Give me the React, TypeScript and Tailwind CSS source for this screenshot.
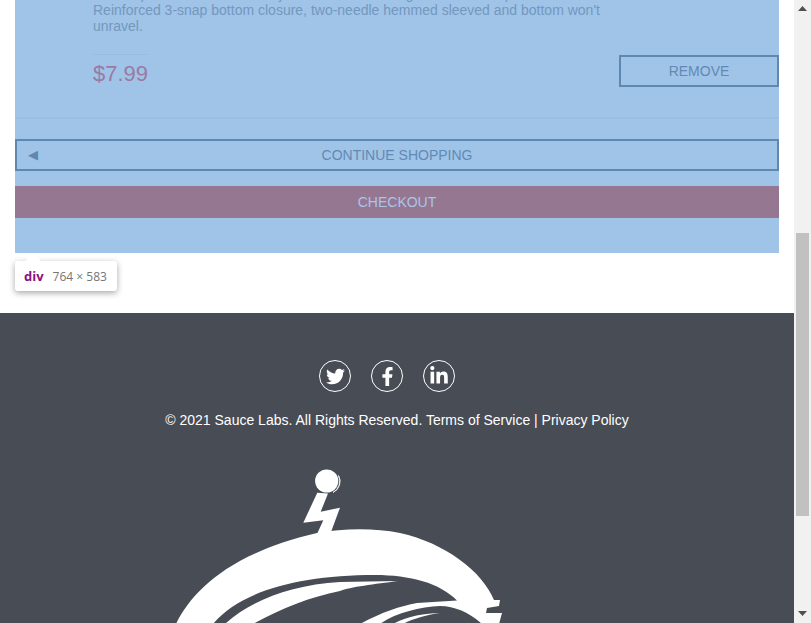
import React from 'react';
import { FaFacebookF, FaLinkedinIn, FaTwitter } from 'react-icons/fa';

const SOCIALS = [
  { id: 'twitter', Icon: FaTwitter, size: 'text-[19px]' },
  { id: 'facebook', Icon: FaFacebookF, size: 'text-[19px]' },
  { id: 'linkedin', Icon: FaLinkedinIn, size: 'text-[20px]' },
];

const SauceLogo = () => (
  <svg className="block" width="360" height="163" viewBox="160 460 360 163" fill="#fff">
    {/* antenna */}
    <circle cx="326.7" cy="480" r="11.6" />
    <path d="M338.5 474.5 A13 13 0 0 1 333 491.5 A12 12 0 0 0 338.5 474.5Z" stroke="#fff" strokeWidth="0.8" fill="none" />
    <path d="M317.3 491.7 L303.3 521.7 L323.3 519.3 L317 533 L331 531 L340 506.7 L320.7 510.7 L328 492.5Z" />
    {/* helmet */}
    <path d="M176 623 C192 590 230 552 317 532 C345 527 375 527 400 532 C445 542 482 570 494 599 L500 599 L499 605 L487 607 L486 612 L502 612 L499 623Z" />
    <path d="M213 623 C240 590 300 574 375 574 C410 574 440 582 457 599.5 L417 602 C400 605 380 612 360 623Z" fill="#484c55" />
    <path d="M225 623 C250 600 290 584 340 581 L398 580 C375 583 350 586 340 590 C310 596 280 608 253 623Z" />
    {/* visor */}
    <path d="M380 623 C395 612 420 606 440 605 C455 605 470 612 482 623Z" fill="#484c55" />
    <path d="M393 623 C405 616 425 612 440 612 C425 614 410 619 403 623Z" />
  </svg>
);

export default function App() {
  return (
    <div className="flex h-[623px] overflow-hidden font-['Liberation_Sans',Arial,sans-serif]">
      <main className="relative w-[794px] shrink-0 bg-white">
        <div className="mx-[15px] h-[253px] overflow-hidden bg-[#9fc4e8]">
          <div className="flex h-[119px] border-b-2 border-[#9bbfe3] pl-[78px]">
            <div className="w-[526px] shrink-0">
              <p className="-mt-[14px] text-[14px] leading-[16px] text-[#7497bd]">
                Rib snap infant onesie for the junior automation engineer in development.
                <br />
                Reinforced 3-snap bottom closure, two-needle hemmed sleeved and bottom won't
                <br />
                unravel.
              </p>
              <div className="mt-[20px] w-[55px] border-t border-[#98bce0] pt-[5px] text-[22px] leading-[28px] text-[#9b79a5]">
                $7.99
              </div>
            </div>
            <button className="mt-[55px] h-[32px] w-[160px] shrink-0 self-start border-2 border-[#5f88b0] text-[14px] text-[#6289b4]">
              REMOVE
            </button>
          </div>
          <button className="relative mt-[20px] block h-[32px] w-full border-2 border-[#5f88b0] text-[14px] text-[#6289b4]">
            <span className="absolute left-[11px] top-[5px] text-[13px] leading-[18px] text-[#5f88b0]">◀</span>
            CONTINUE SHOPPING
          </button>
          <button className="mt-[15px] block h-[32px] w-full bg-[#957792] text-[14px] text-[#a9c5ea]">
            CHECKOUT
          </button>
        </div>

        {/* devtools inspect tooltip */}
        <div className="absolute left-[15px] top-[261px] flex h-[30px] w-[102px] items-center gap-[9px] rounded-[3px] bg-white pl-[9px] pt-[1px] font-['Open_Sans',sans-serif] text-[12px] shadow-[0_2px_6px_rgba(0,0,0,0.35)]">
          <span className="absolute -top-[8px] left-[10px] h-0 w-0 border-x-[8px] border-b-[8px] border-x-transparent border-b-white" />
          <span className="text-[13px] font-bold text-[#881280]">div</span>
          <span className="text-[#757575]">764 × 583</span>
        </div>

        <footer className="mt-[60px] h-[310px] overflow-hidden bg-[#484c55]">
          <div className="flex justify-center gap-[20px] pr-[20px] pt-[47px]">
            {SOCIALS.map(({ id, Icon, size }) => (
              <span
                key={id}
                className={`flex h-[32px] w-[32px] items-center justify-center rounded-full border border-white text-white ${size}`}
              >
                <Icon />
              </span>
            ))}
          </div>
          <p className="mt-[18px] text-center text-[14px] leading-[20px] text-white">
            © 2021 Sauce Labs. All Rights Reserved. Terms of Service | Privacy Policy
          </p>
          <div className="mt-[31px] pl-[160px]">
            <SauceLogo />
          </div>
        </footer>
      </main>

      {/* scrollbar */}
      <div className="flex w-[17px] shrink-0 flex-col items-center bg-[#f1f1f1]">
        <svg className="mt-[6px] shrink-0" width="9" height="5" viewBox="0 0 9 5" fill="#505050">
          <path d="M4.5 0 L9 5 L0 5Z" />
        </svg>
        <div className="mt-[222px] h-[283px] w-[13px] shrink-0 bg-[#c1c1c1]" />
        <svg className="mt-[95px] shrink-0" width="9" height="5" viewBox="0 0 9 5" fill="#505050">
          <path d="M0 0 L9 0 L4.5 5Z" />
        </svg>
      </div>
    </div>
  );
}
